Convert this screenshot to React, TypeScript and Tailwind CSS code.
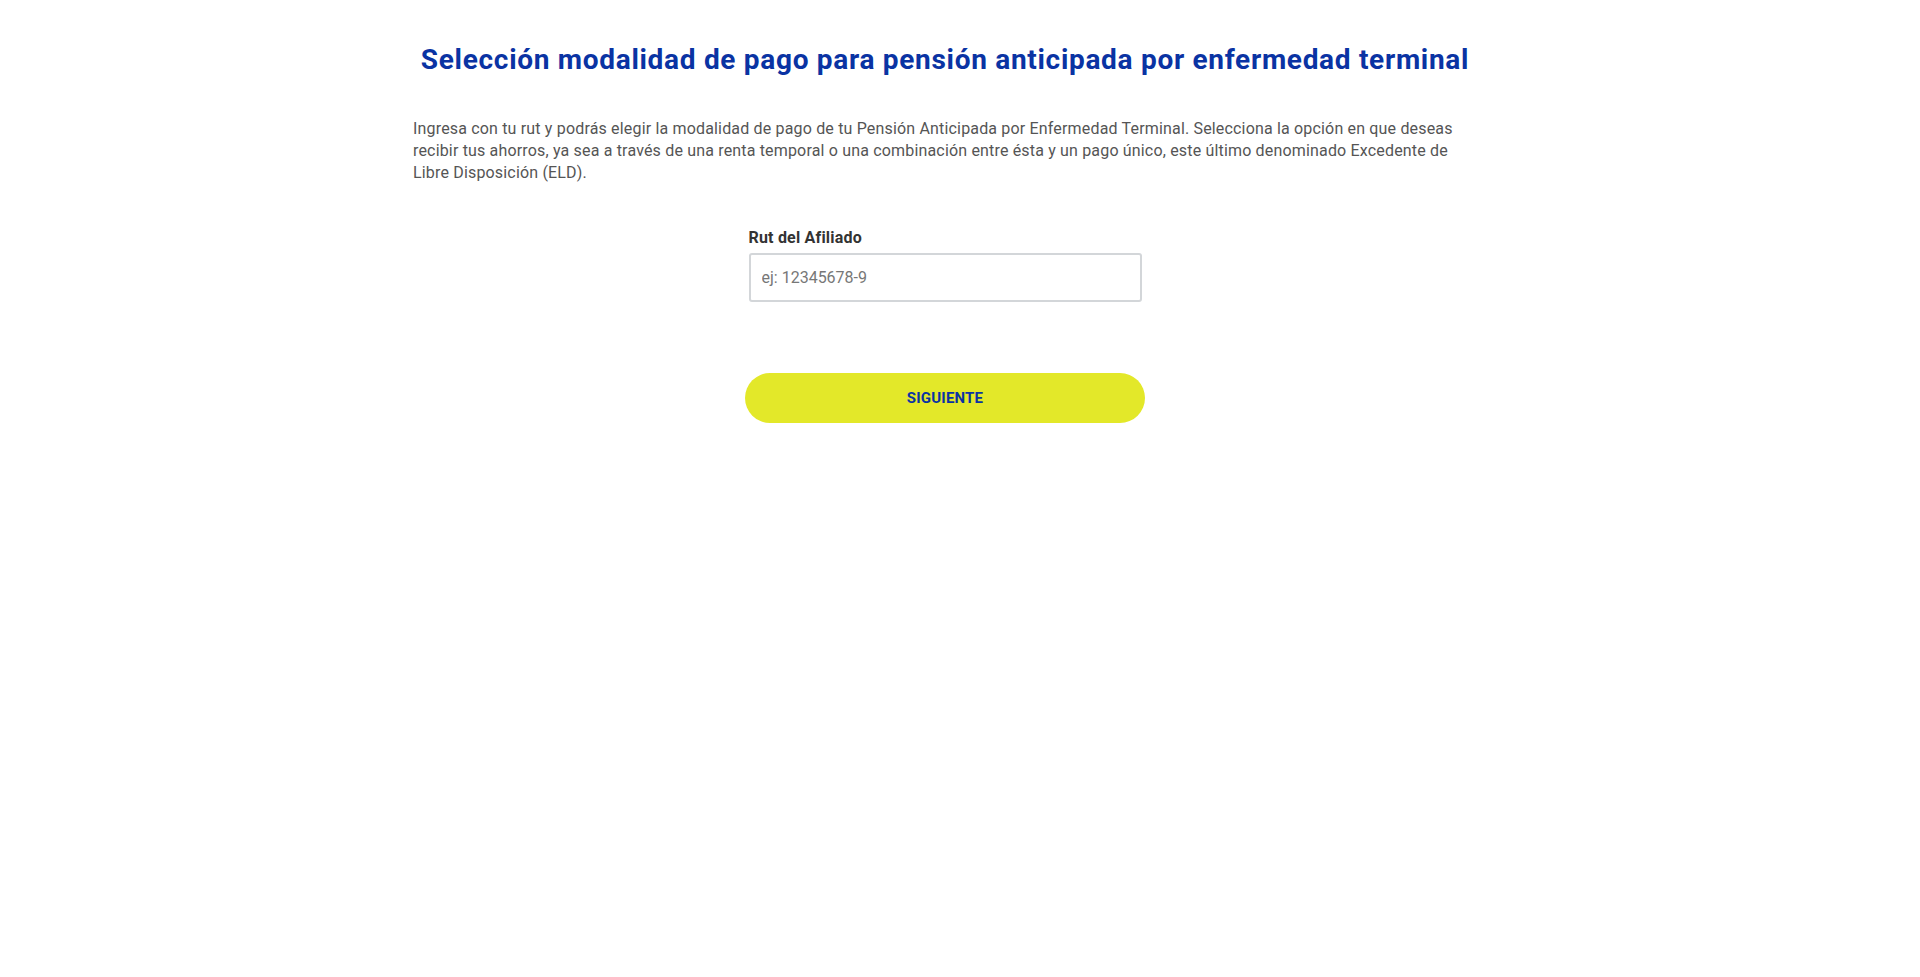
import React, { useState } from 'react';

const App: React.FC = () => {
  const [rut, setRut] = useState('');

  return (
    <div className="min-h-[977px] w-full bg-white" style={{ fontFamily: 'Roboto, "Liberation Sans", sans-serif' }}>
      <div className="mx-auto w-[1094px] pr-[30px]">
        {/* Title */}
        <h1 className="pt-[44px] text-center text-[28px] font-bold leading-[32px] tracking-[0.7px] text-[#0a33a3]">
          Selección modalidad de pago para pensión anticipada por enfermedad terminal
        </h1>

        {/* Description */}
        <p className="mt-[42px] text-[16px] leading-[22px] tracking-[0.17px] text-[#555555]">
          Ingresa con tu rut y podrás elegir la modalidad de pago de tu Pensión Anticipada por Enfermedad Terminal. Selecciona la opción en que deseas recibir tus ahorros, ya sea a través de una renta temporal o una combinación entre ésta y un pago único, este último denominado Excedente de Libre Disposición (ELD).
        </p>

        {/* Form */}
        <div className="mt-[44px] flex flex-col items-center">
          <div className="w-[393px]">
            <label htmlFor="rut" className="block text-[16px] font-bold leading-[20px] tracking-[0.2px] text-[#333333]">
              Rut del Afiliado
            </label>
            <input
              id="rut"
              value={rut}
              onChange={(e) => setRut(e.target.value)}
              placeholder="ej: 12345678-9"
              className="mt-[5px] h-[49px] w-full rounded-[3px] border-2 border-[#d3d6d9] px-[11px] text-[16px] text-[#333333] outline-none placeholder:text-[#777777]"
            />
          </div>

          <button className="mt-[71px] h-[50px] w-[400px] rounded-full bg-[#e3e829] text-[15px] font-bold tracking-[0.2px] text-[#0a33a3]">
            SIGUIENTE
          </button>
        </div>
      </div>
    </div>
  );
};

export default App;
